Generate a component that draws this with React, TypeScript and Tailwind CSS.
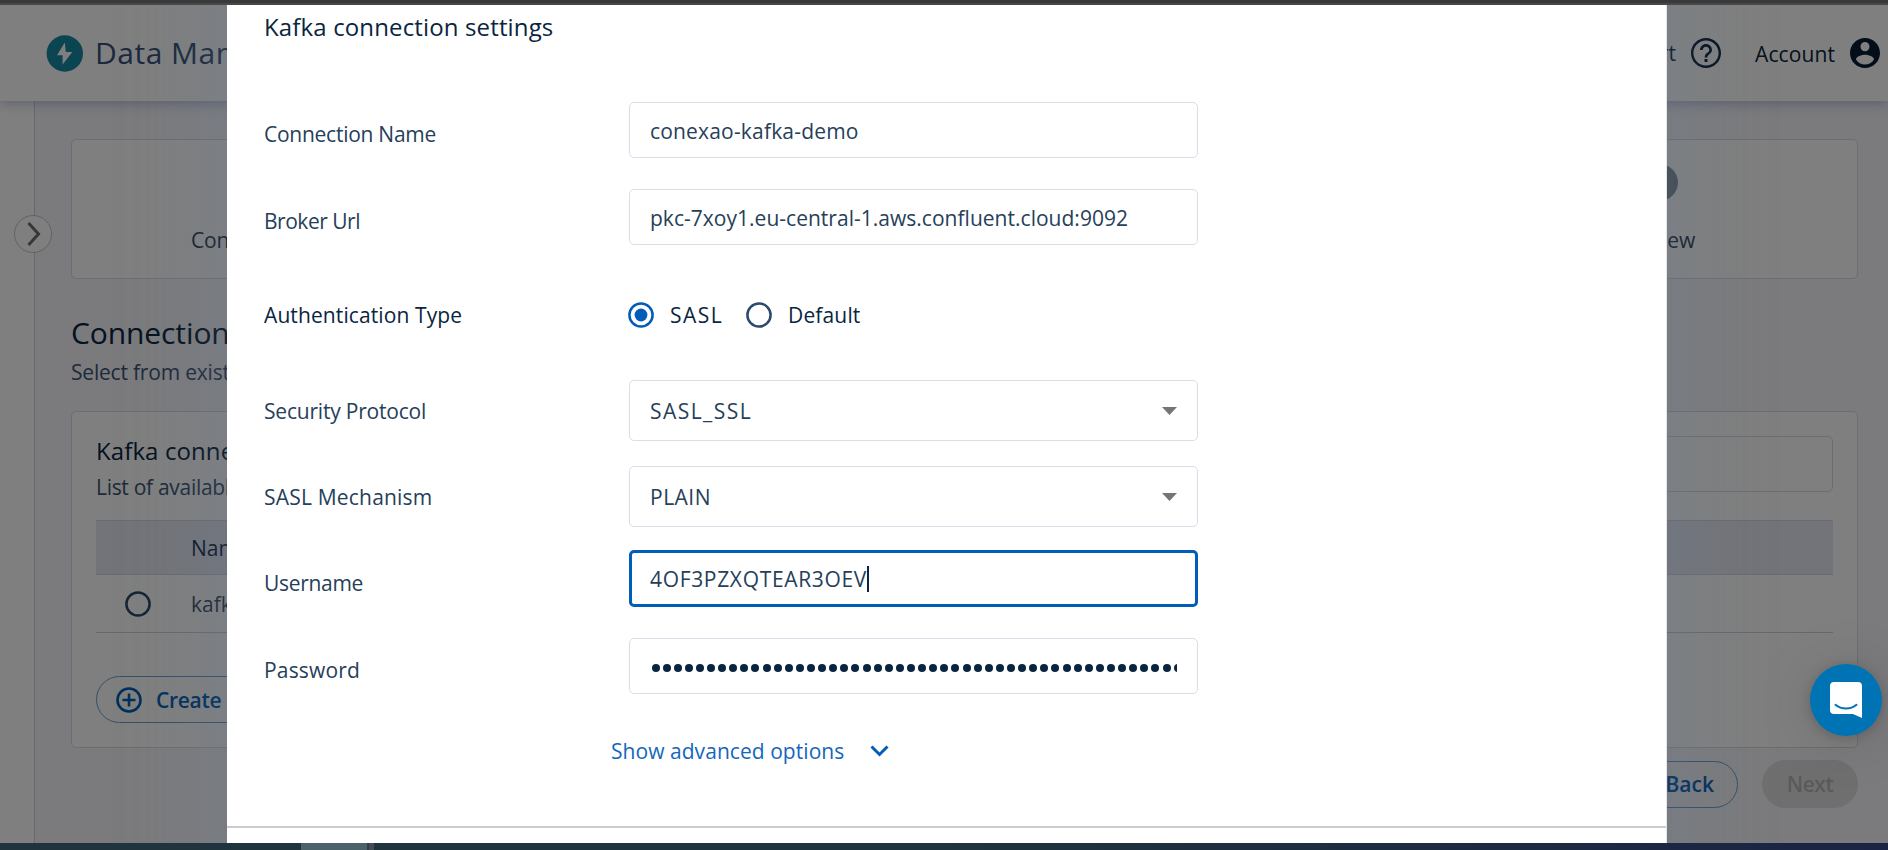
import type { ReactNode } from 'react';

function FormRow({ label, className, labelClass = '', children }: { label: string; className: string; labelClass?: string; children: ReactNode }) {
  return (
    <div className={`flex items-center ${className}`}>
      <div className={`w-[365px] shrink-0 ${labelClass}`}>{label}</div>
      {children}
    </div>
  );
}

function Field({ children, className = 'border border-[#dcdde9] px-[20px]' }: { children: ReactNode; className?: string }) {
  return <div className={`flex h-full w-[569px] items-center rounded-[5px] bg-white ${className}`}>{children}</div>;
}

function Caret() {
  return (
    <svg className="ml-auto h-[8px] w-[15px]" viewBox="0 0 15 8">
      <path d="M0 0h15L7.5 8z" fill="#757575" />
    </svg>
  );
}

function Radio({ checked = false }: { checked?: boolean }) {
  const color = checked ? '#005eb8' : '#2c4a6b';
  return (
    <svg className="size-[26px] shrink-0" viewBox="0 0 26 26">
      <circle cx="13" cy="13" r="11.6" fill="none" stroke={color} strokeWidth="2.5" />
      {checked && <circle cx="13" cy="13" r="6.4" fill={color} />}
    </svg>
  );
}

function Header() {
  return (
    <header className="relative z-10 flex h-[96px] shrink-0 items-center bg-white pr-[8px] pl-[46px] shadow-[0_2px_12px_rgba(80,95,150,0.4)]">
      <svg className="size-[37px]" viewBox="0 0 37 37">
        <circle cx="18.8" cy="18.5" r="18.2" fill="#178aa4" />
        <path d="M18.8 7.5 11 20.3h5.6v9.2L26.3 17h-6.5z" fill="#fff" />
      </svg>
      <span className="ml-[12px] text-[30px] tracking-[0.5px] text-[#34527c]">Data Manager</span>
      <span className="ml-auto tracking-[0.1px] text-[#14304d]">Support</span>
      <svg className="ml-[12px] size-[36px]" viewBox="0 0 24 24" fill="#0a2540">
        <path d="M11 18h2v-2h-2v2zm1-16C6.48 2 2 6.48 2 12s4.48 10 10 10 10-4.48 10-10S17.52 2 12 2zm0 18.4c-4.63 0-8.4-3.77-8.4-8.4S7.37 3.6 12 3.6s8.4 3.77 8.4 8.4-3.77 8.4-8.4 8.4zM12 6c-2.21 0-4 1.79-4 4h1.8c0-1.2 1-2.2 2.2-2.2s2.2 1 2.2 2.2c0 2-3.1 1.75-3.1 5h1.8c0-2.25 3.1-2.5 3.1-5 0-2.21-1.79-4-4-4z" />
      </svg>
      <span className="mt-px ml-[31px] tracking-[0.1px] text-[#0a2540]">Account</span>
      <svg className="-mr-[3px] ml-[12px] size-[36px]" viewBox="0 0 24 24" fill="#061d33">
        <path d="M12 2C6.48 2 2 6.48 2 12s4.48 10 10 10 10-4.48 10-10S17.52 2 12 2zm0 2.7c1.66 0 3 1.34 3 3.1s-1.34 3.1-3 3.1-3-1.34-3-3.1 1.34-3.1 3-3.1zm0 14.9c-2.5 0-4.71-1.18-6-3.32.03-1.99 4-3.08 6-3.08 1.99 0 5.97 1.09 6 3.08-1.29 2.14-3.5 3.32-6 3.32z" />
      </svg>
    </header>
  );
}

const steps = [
  { name: 'Config', width: 'w-[120px]' },
  { name: 'Review', width: '' },
];

function Stepper() {
  return (
    <div className="mt-[38px] flex h-[140px] justify-between rounded-[5px] border border-[#d9dae4] bg-white pt-[24px] pr-[162px] pl-[119px]">
      {steps.map((s) => (
        <div key={s.name} className="flex flex-col items-center">
          <span className="mr-[4px] size-[37px] rounded-full bg-[#83949f]" />
          <span className={`mt-[24px] tracking-[-0.2px] text-[#2b4058] ${s.width}`}>{s.name}</span>
        </div>
      ))}
    </div>
  );
}

function Connections() {
  return (
    <div className="mt-[24px] h-[337px] rounded-[5px] border border-[#d9dae4] bg-white px-[24px] pt-[24px]">
      <div className="flex h-[84px] justify-between">
        <div>
          <div className="text-[24px] tracking-[0.1px] text-[#0a2540]">Kafka connect</div>
          <div className="mt-[6px] tracking-[-0.3px] text-[#3c5475]">List of available</div>
        </div>
        <div className="h-[56px] w-[400px] rounded-[5px] border border-[#d9dae4]" />
      </div>
      <div className="flex h-[55px] items-center border-y border-[#d3d5df] bg-[#e7e8f2] pt-px pl-[95px] text-[#14304d]">Name</div>
      <div className="flex h-[58px] items-center border-b border-[#cfd1da] pl-[29px] text-[#3c5068]">
        <Radio />
        <span className="ml-[40px]">kafka</span>
      </div>
      <div className="mt-[43px] flex h-[47px] w-[260px] items-center rounded-full border border-[#6c9fd2] pl-[19px] font-semibold text-[#005eb8]">
        <svg className="size-[26px]" viewBox="0 0 26 26" fill="none" stroke="#005eb8" strokeWidth="2.6">
          <circle cx="13" cy="13" r="11.5" />
          <path d="M13 6.5v13M6.5 13h13" />
        </svg>
        <span className="mt-px ml-[14px] tracking-[-0.3px]">Create new</span>
      </div>
    </div>
  );
}

function Modal() {
  return (
    <div className="absolute inset-0 z-20 flex items-stretch bg-black/50 pl-[227px]">
      <div className="-my-[150px] w-[1440px] border-r border-[#e4e6ee] bg-white py-[150px] text-[#264059] shadow-[0_0_100px_rgba(110,130,160,0.32)]">
        <div className="flex h-full flex-col pt-[7px]">
          <div className="pl-[37px]">
            <div className="text-[24px] tracking-[0.14px] text-[#0a2540]">Kafka connection settings</div>
            <FormRow label="Connection Name" className="mt-[60px] h-[56px]" labelClass="pt-[7px] tracking-[-0.26px]">
              <Field><span className="pt-px tracking-[0.18px]">conexao-kafka-demo</span></Field>
            </FormRow>
            <FormRow label="Broker Url" className="mt-[31px] h-[56px]" labelClass="pt-[7px] tracking-[-0.48px]">
              <Field><span className="pt-px tracking-[0.02px]">pkc-7xoy1.eu-central-1.aws.confluent.cloud:9092</span></Field>
            </FormRow>
            <FormRow label="Authentication Type" className="mt-[57px] h-[26px] text-[#0a2540]" labelClass="tracking-[0.1px]">
              <span className="-ml-px flex items-center">
                <Radio checked />
                <span className="ml-[16px] w-[76px] tracking-[1.5px]">SASL</span>
                <Radio />
                <span className="ml-[16px] tracking-[0.15px]">Default</span>
              </span>
            </FormRow>
            <FormRow label="Security Protocol" className="mt-[52px] h-[61px]" labelClass="tracking-[-0.2px]">
              <Field><span className="tracking-[1.45px]">SASL_SSL</span><Caret /></Field>
            </FormRow>
            <FormRow label="SASL Mechanism" className="mt-[25px] h-[61px]" labelClass="tracking-[0.2px]">
              <Field><span className="tracking-[0.5px]">PLAIN</span><Caret /></Field>
            </FormRow>
            <FormRow label="Username" className="mt-[23px] h-[57px]" labelClass="pt-[8px] tracking-[-0.3px]">
              <Field className="border-3 border-[#005eb8] px-[18px]">
                <span className="pt-px tracking-[0.67px]">4OF3PZXQTEAR3OEV</span>
                <span className="h-[26px] w-[2px] bg-[#0a2540]" />
              </Field>
            </FormRow>
            <FormRow label="Password" className="mt-[31px] h-[56px]" labelClass="pt-[7px] tracking-[0.17px]">
              <Field>
                <div className="flex w-full gap-[3.11px] overflow-hidden pt-[4px] pl-[1.5px]">
                  {Array.from({ length: 48 }, (_, i) => (
                    <span key={i} className="size-[8px] shrink-0 rounded-full bg-[#0a2540]" />
                  ))}
                </div>
              </Field>
            </FormRow>
          </div>
          <div className="mt-[42px] flex items-center pl-[384px] tracking-[0.05px] text-[#1467bc]">
            Show advanced options
            <svg className="ml-[26px] h-[12px] w-[19px]" viewBox="0 0 19 12" fill="none" stroke="#005eb8" strokeWidth="3">
              <path d="M1.5 1.5 9.5 9.5l8-8" />
            </svg>
          </div>
          <div className="mt-auto h-[17px] border-t-2 border-[#cbccd2]" />
        </div>
      </div>
    </div>
  );
}

export default function App() {
  return (
    <div className="flex h-[850px] w-[1888px] flex-col overflow-hidden font-['Open_Sans',sans-serif] text-[21px] leading-[30px] whitespace-nowrap">
      <div className="h-[5px] shrink-0 border-b-2 border-[#484848] bg-[#393939]" />
      <div className="relative flex min-h-0 flex-1 flex-col overflow-hidden bg-[#f6f6fb]">
        <Header />
        <div className="flex min-h-0 flex-1">
          <nav className="relative w-[35px] shrink-0 border-r border-[#cfcfd4] bg-white">
            <span className="absolute top-[114px] left-[14px] flex size-[38px] items-center justify-center rounded-full border border-[#c4c4c8] bg-white">
              <svg className="ml-[2px] h-[26px] w-[14px]" viewBox="0 0 14 26" fill="none" stroke="#6e6e6e" strokeWidth="3">
                <path d="m1.5 2 10 11-10 11" />
              </svg>
            </span>
          </nav>
          <main className="min-w-0 flex-1 pr-[30px] pl-[36px]">
            <Stepper />
            <h1 className="mt-[34px] text-[30px] leading-[40px] tracking-[-0.1px] text-[#0a2540]">Connection</h1>
            <p className="mt-[4px] tracking-[-0.2px] text-[#3c5475]">Select from existing</p>
            <Connections />
            <div className="mt-[12px] flex h-[48px] items-center justify-end gap-[24px] font-semibold">
              <span className="flex h-[47px] w-[120px] items-center justify-end rounded-full border border-[#6c9fd2] pr-[23px] text-[#005eb8]">Back</span>
              <span className="flex h-[48px] w-[96px] items-center justify-center rounded-full bg-[#dfdfdf] tracking-[-0.5px] text-[#b4b4b4]">Next</span>
            </div>
          </main>
        </div>
        <Modal />
        <div className="absolute top-[659px] right-[6px] z-30 flex size-[72px] items-center justify-center rounded-full bg-[#0073b5] shadow-[0_2px_12px_rgba(0,0,0,0.18),0_4px_60px_rgba(0,0,0,0.14)]">
          <svg className="h-[36px] w-[32px]" viewBox="0 0 32 36">
            <path d="M4 0h24a4 4 0 0 1 4 4v32l-9-4H4a4 4 0 0 1-4-4V4a4 4 0 0 1 4-4z" fill="#fff" />
            <path d="M5.5 22.8c6 5 15 5 21 0" fill="none" stroke="#0073b5" strokeWidth="2" strokeLinecap="round" />
          </svg>
        </div>
      </div>
      <div className="flex h-[7px] shrink-0 bg-linear-to-r from-[#20343e] via-[#1f343e] to-[#1b2444]">
        <span className="ml-[301px] w-[66px] bg-[#4c626a]" />
        <span className="w-[2px] bg-[#333d43]" />
        <span className="w-[5px] bg-[#434d54]" />
      </div>
    </div>
  );
}
